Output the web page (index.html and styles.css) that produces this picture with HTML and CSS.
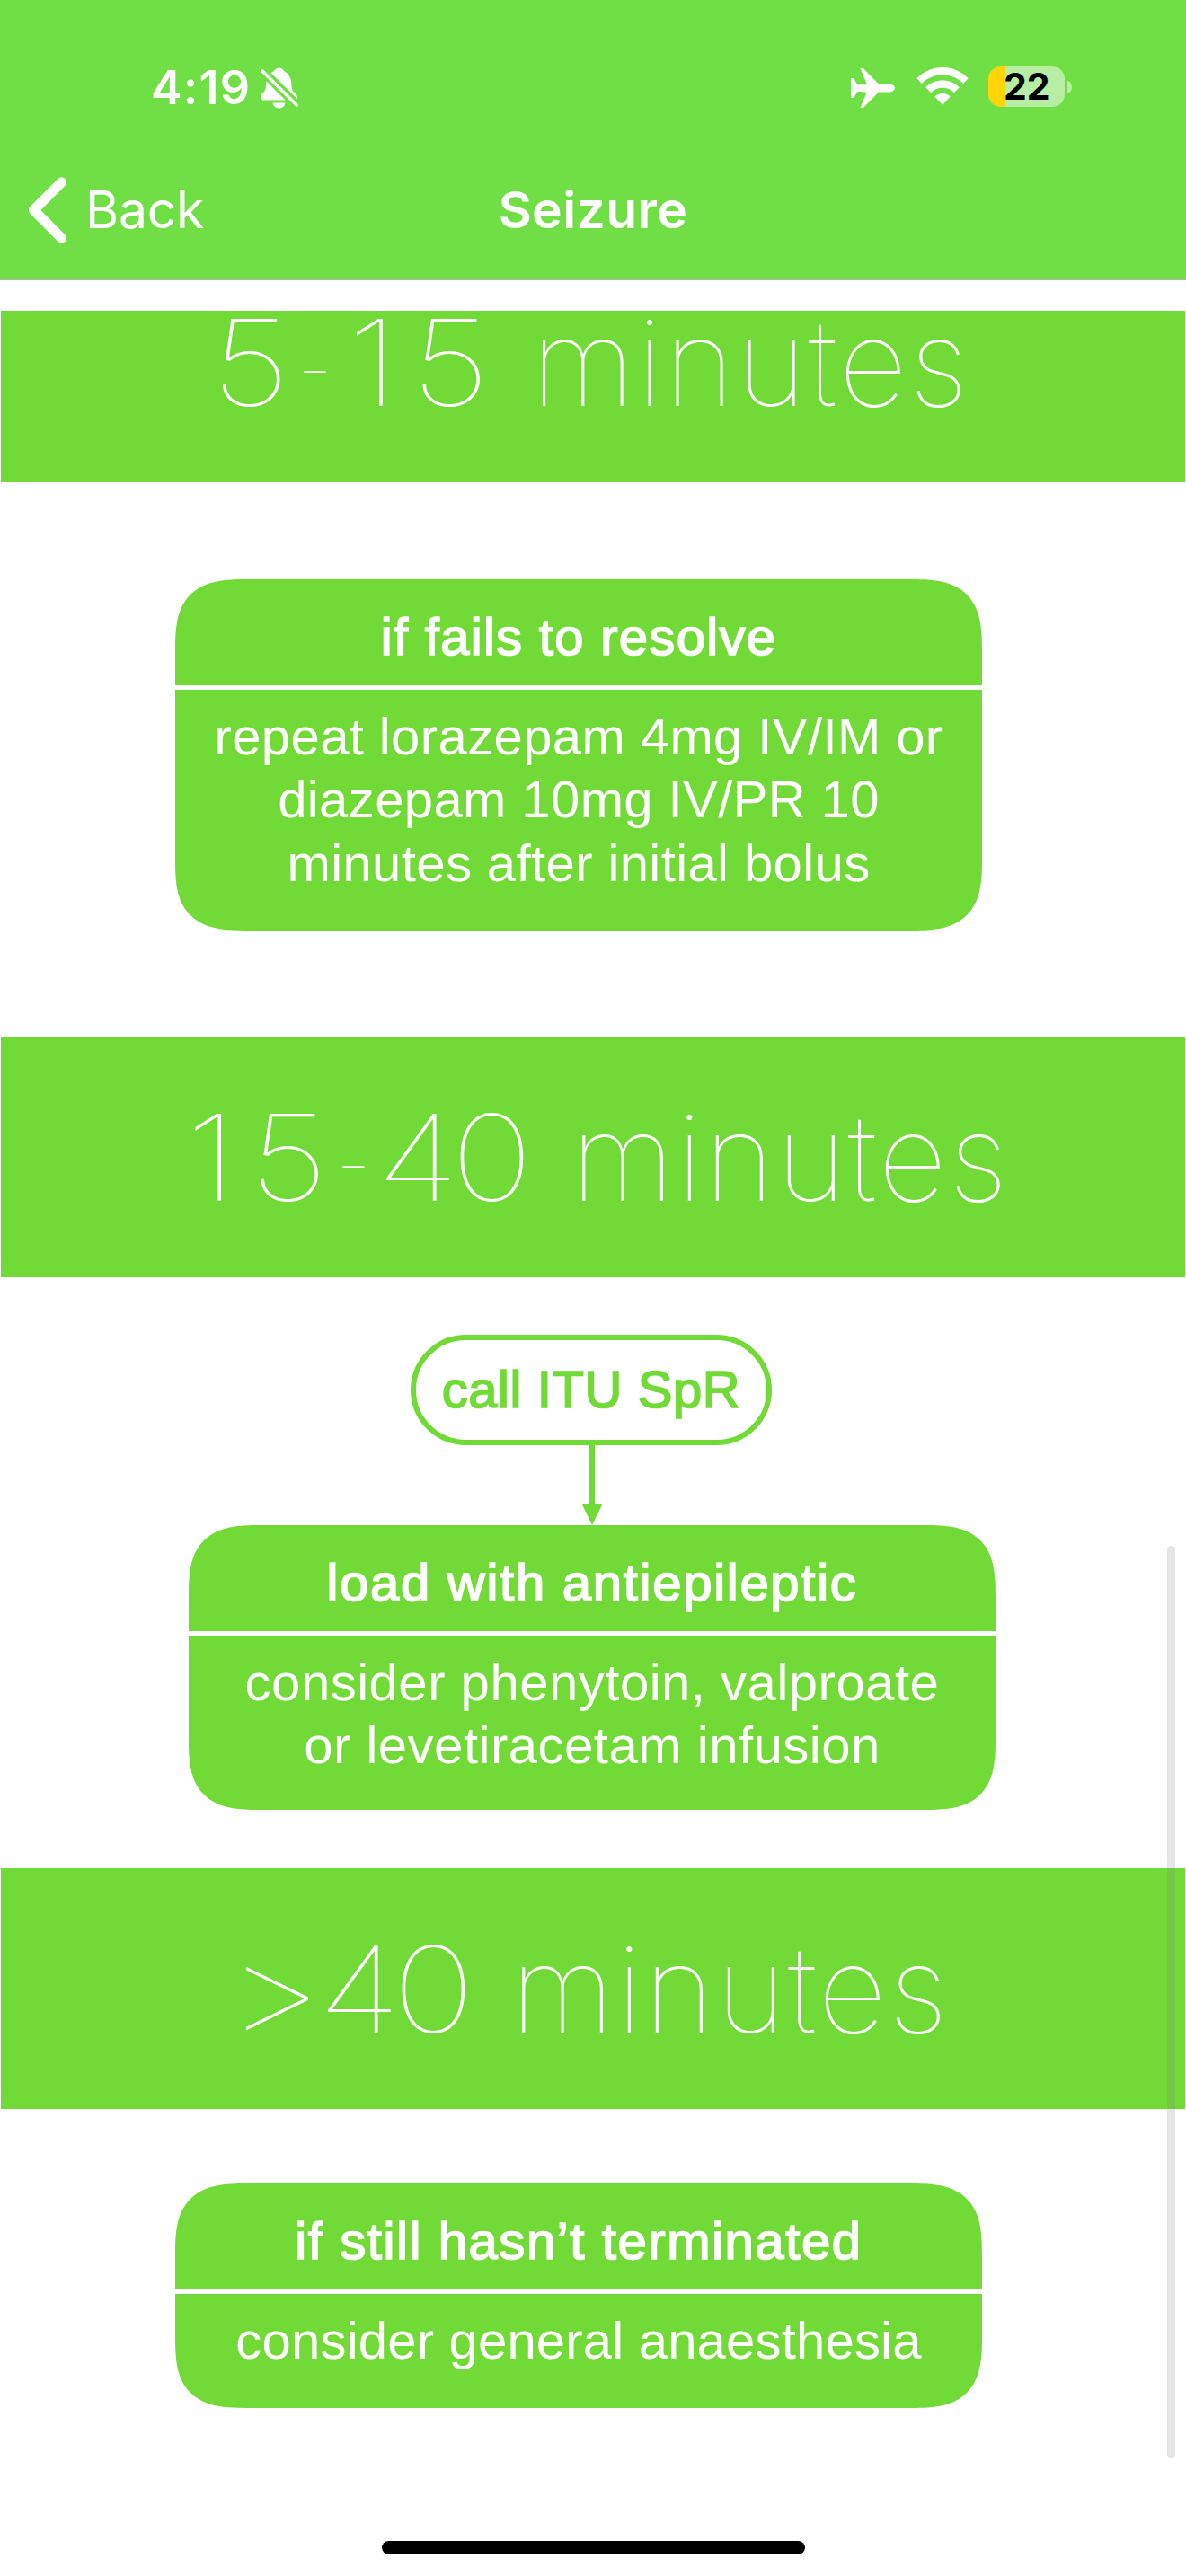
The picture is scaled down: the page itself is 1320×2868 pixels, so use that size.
FILE: index.html
```html
<!DOCTYPE html>
<html lang="en">
<head>
<meta charset="utf-8">
<title>Seizure</title>
<link rel="stylesheet" href="styles.css">
</head>
<body>
<header class="header">
  <div class="status">
    <div class="status-left">
      <span class="time">4:19</span>
      <svg class="bell" width="44" height="48" viewBox="0 0 44 48" fill="#fff">
        <path d="M12.500 7.200C14.500 6 15.500 5.600 16.200 4.600C17.400 2.400 19.400 1.400 21.500 1.400C23.600 1.400 25.600 2.400 27 5C32.500 8.200 34.700 12.500 35.200 18C35.600 22.500 35.600 26.500 38 28.500C40.500 30.700 42.300 32.600 42 36.200Z"/>
        <path d="M7.400 16.200L28.600 37.400H4.500C2.400 37.400 1 36.200 1 34.200C1 30.800 4.400 29.500 6 26.500C7.200 24 7 20 7.400 16.200Z"/>
        <path d="M14.600 40.400H28.400C28 44 25.200 46.400 21.500 46.400C17.800 46.400 15 44 14.600 40.400Z"/>
        <path d="M3 5L41.200 43" stroke="#fff" stroke-width="3.600" stroke-linecap="round"/>
      </svg>
    </div>
    <div class="status-right">
      <svg class="plane" width="50" height="46" viewBox="0 0 50 46" fill="#fff">
        <path d="M10.500 1H12.600C13.700 1 14.400 1.500 15.200 2.500L31 18.400H42C46 18.400 49 20.300 49 23C49 25.600 46 27.600 42 27.600H31L15.600 43.300C14.600 44.500 13.700 45 12.600 45H10.500L17.600 27.700L7.500 26.700L3.600 33C3.200 33.700 2.800 34 2 34H0V12H2C2.800 12 3.200 12.300 3.600 13L7.600 19.400L17.600 18.300Z"/>
      </svg>
      <svg class="wifi" width="58" height="44" viewBox="0 0 58 44" fill="#fff">
        <path d="M.3 13.300C8 5.300 18 1 29 1S50 5.300 57.700 13.300L52.200 19C46 12.900 38 9.600 29 9.600S12 12.900 5.800 19Z"/>
        <path d="M10.200 23.300C15.300 18.200 21.800 15.600 29 15.600S42.700 18.200 47.800 23.300L42 29C38.500 25.700 34 23.800 29 23.800S19.500 25.700 16 29Z"/>
        <path d="M20.300 33.500C22.700 31.200 25.700 30 29 30S35.300 31.200 37.700 33.500L29 42.800Z"/>
      </svg>
      <div class="battery"><span class="battery-level">22</span></div>
      <span class="battery-nub"></span>
    </div>
  </div>
  <nav class="nav">
    <a class="back">
      <svg width="46" height="76" viewBox="0 0 46 76" fill="none" stroke="#fff" stroke-width="11" stroke-linecap="round" stroke-linejoin="round"><path d="M38.500 6.800L7.500 38L38.500 69.200"/></svg>
      <span>Back</span>
    </a>
    <h1 class="title">Seizure</h1>
  </nav>
</header>
<main class="flow">
  <h2 class="band band-first"><span class="band-text"><span class="range">5<span class="dash">-</span><span class="one">1</span>5</span> minutes</span></h2>
  <section class="card card-first">
    <h3 class="card-title">if fails to resolve</h3>
    <p class="card-body">repeat lorazepam 4mg IV/IM or<br>diazepam 10mg IV/PR 10<br>minutes after initial bolus</p>
  </section>
  <h2 class="band band-second"><span class="band-text"><span class="range"><span class="one">1</span>5<span class="dash">-</span><span class="four">4</span>0</span> minutes</span></h2>
  <div class="step">
    <div class="pill">call ITU SpR</div>
    <svg class="arrow" width="24" height="89" viewBox="0 0 24 89" fill="#72da37"><path d="M9 0H15V65H23.700L12 89L.4 65H9Z"/></svg>
  </div>
  <section class="card card-load">
    <h3 class="card-title">load with antiepileptic</h3>
    <p class="card-body">consider phenytoin, valproate<br>or levetiracetam infusion</p>
  </section>
  <h2 class="band band-third"><span class="band-text"><span class="range"><span class="over">&gt;</span><span class="four">4</span>0</span> minutes</span></h2>
  <section class="card card-last">
    <h3 class="card-title">if still hasn’t terminated</h3>
    <p class="card-body">consider general anaesthesia</p>
  </section>
</main>
<div class="scrollbar"></div>
<div class="home-indicator"></div>
</body>
</html>
```
FILE: styles.css
```css
* { box-sizing: border-box; }
body {
  margin: 0;
  position: relative;
  height: 2868px;
  overflow: hidden;
  background: #fff;
  color: #fff;
  font-family: "Liberation Sans", Arial, sans-serif;
}
h1, h2, h3, p { margin: 0; font-weight: 400; }
svg { display: block; flex: none; }

.header {
  height: 312px;
  background: #70df46;
  border-bottom: 1px solid #b2b2b2;
  font-family: Inter, sans-serif;
}
.status {
  display: flex;
  justify-content: space-between;
  height: 156px;
  padding: 74px 127px 0 168px;
}
.status-left, .status-right { display: flex; align-items: flex-start; }
.time {
  width: 121px;
  font-size: 52px;
  font-weight: 600;
  line-height: 48px;
  letter-spacing: 1.2px;
}
.plane { margin: 1px 23px 0 0; }
.wifi { margin: 0 22px 0 0; }
.battery {
  width: 85px;
  height: 45px;
  border-radius: 14px;
  background: linear-gradient(to right, #ffd60a 19px, #b8eea3 19px);
  color: #000;
}
.battery-level {
  display: block;
  padding-left: 17px;
  font-size: 41px;
  font-weight: 650;
  line-height: 45px;
}
.battery-nub {
  width: 5px;
  height: 14px;
  margin: 16px 0 0 3px;
  border-radius: 0 5px 5px 0 / 0 7px 7px 0;
  background: #b8eea3;
}
.nav {
  display: grid;
  grid-template-columns: 1fr auto 1fr;
  align-items: start;
  padding: 40px 30px 0;
  font-size: 57px;
  line-height: 76px;
}
.back { display: flex; gap: 19px; letter-spacing: -0.3px; }
.title { font-size: 57px; font-weight: 600; letter-spacing: 0.4px; }

.flow { padding: 34px 1px 0; }

.band {
  display: flex;
  align-items: flex-end;
  height: 268px;
  background: #72da37;
  font-family: Inter, sans-serif;
  font-size: 133px;
  font-weight: 100;
}
.band-text {
  padding-bottom: 75px;
  line-height: 116px;
  letter-spacing: 2.3px;
  white-space: pre;
}
.range {
  display: inline-block;
  letter-spacing: 0;
  transform: scaleX(1.17);
  transform-origin: left;
}
.dash { font-size: 76px; line-height: 1; vertical-align: 14.5px; margin: 0 4.9px 0 7.2px; }
.one { margin: 0 11.9px 0 9px; }
.four { margin-right: -8.2px; }
.over {
  display: inline-block;
  margin-right: 4.6px;
  transform: scaleX(1.135);
  transform-origin: left;
}
.band-first { height: 191px; padding-left: 233.8px; }
.band-first .range { margin-right: 51.8px; }
.band-second { margin-top: 118px; padding-left: 194.8px; }
.band-second .range { margin-right: 60.3px; }
.band-third { margin-top: 65px; padding-left: 247.8px; }
.band-third .range { margin-right: 41.2px; }

.card {
  width: 898px;
  margin-left: 194px;
  overflow: hidden;
  border-radius: 80px;
  corner-shape: superellipse(1.54);
  background: #72da37;
  font-size: 58px;
  text-align: center;
  white-space: nowrap;
}
.card-title {
  height: 118px;
  padding-top: 11px;
  font-size: 58px;
  line-height: 106px;
  -webkit-text-stroke: 1.7px currentColor;
}
.card-body {
  padding: 17px 0 56px;
  border-top: 5px solid #fff;
  line-height: 70.4px;
}
.card-first { height: 391px; margin-top: 108px; letter-spacing: 0.4px; }
.card-first .card-title { letter-spacing: 1.3px; }
.card-load { height: 317px; margin-left: 209px; letter-spacing: 0.52px; }
.card-load .card-title { letter-spacing: 1.73px; }
.card-last { height: 250px; margin-top: 83px; letter-spacing: 0.2px; }
.card-last .card-title { height: 117px; letter-spacing: 1.59px; }
.card-last .card-body { border-top-width: 6px; }

.step {
  display: flex;
  flex-direction: column;
  align-items: center;
  padding-top: 64px;
}
.pill {
  width: 402px;
  height: 123px;
  margin-right: 4px;
  border: 6px solid #72da37;
  border-radius: 62px;
  color: #72da37;
  font-size: 58px;
  line-height: 110px;
  text-align: center;
  letter-spacing: 0.6px;
  -webkit-text-stroke: 1.7px currentColor;
}
.arrow { margin-right: 2px; }

.scrollbar {
  position: absolute;
  top: 1721px;
  left: 1299px;
  width: 9px;
  height: 1016px;
  border-radius: 5px;
  background: rgba(125, 125, 125, 0.2);
}
.home-indicator {
  position: absolute;
  bottom: 24px;
  left: 425px;
  width: 471px;
  height: 15px;
  border-radius: 8px;
  background: #000;
}
```
